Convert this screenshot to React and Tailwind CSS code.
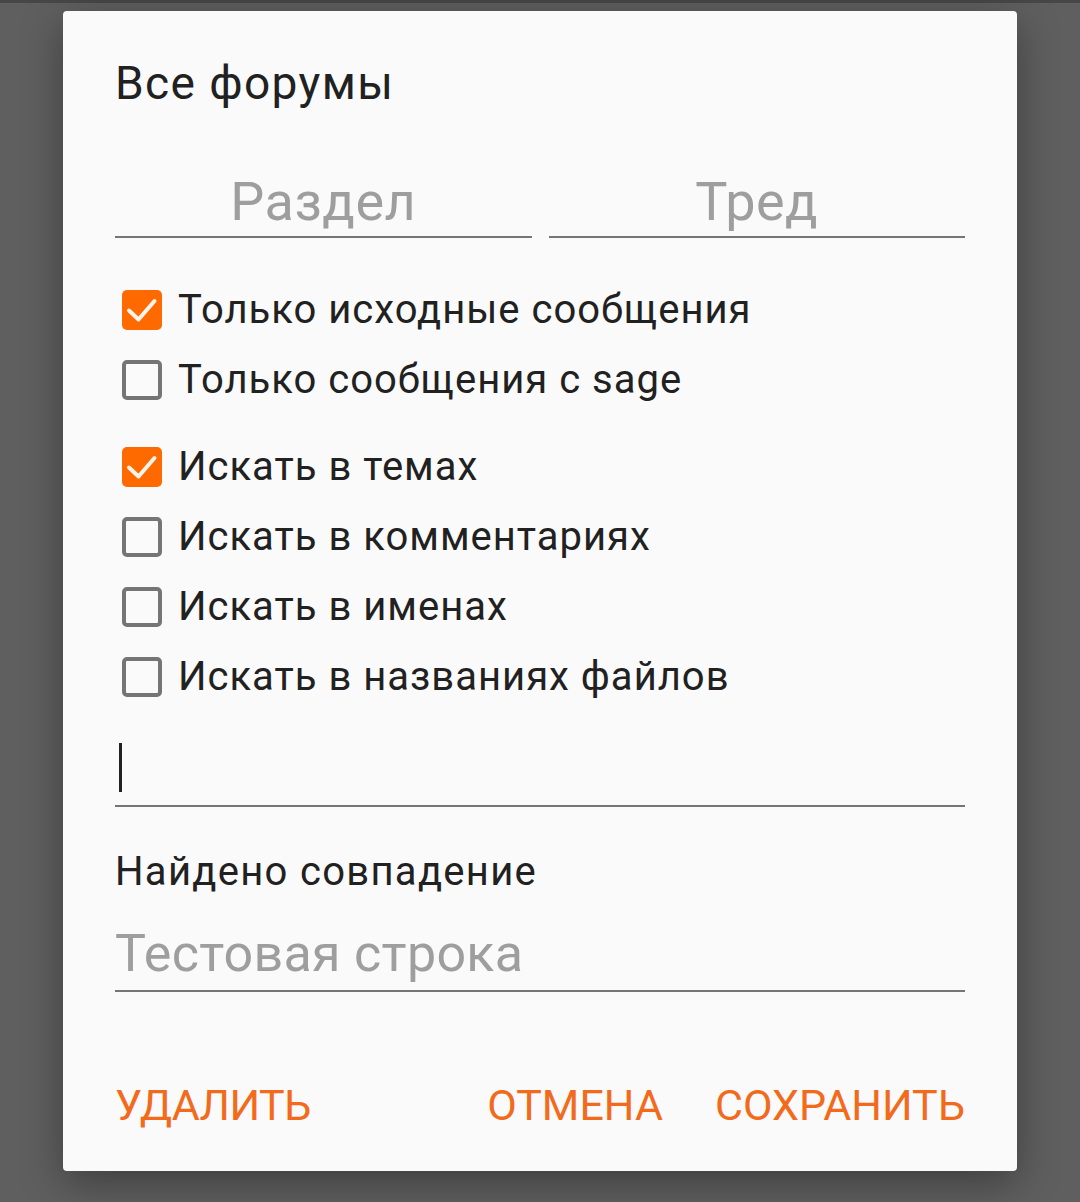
import React from "react";

function Check({ on }) {
  if (on) {
    return (
      <div className="w-[40px] h-[40px] rounded-[5px] bg-[#ff6a00] shrink-0">
        <svg width="40" height="40" viewBox="0 0 40 40" fill="none">
          <path d="M7 20.5l9.5 9L32.5 11" stroke="#fff4ea" strokeWidth="4" strokeLinecap="round" strokeLinejoin="round" />
        </svg>
      </div>
    );
  }
  return <div className="w-[40px] h-[40px] rounded-[5px] border-[4px] border-[#757575] shrink-0" />;
}

function Row({ on, label }) {
  return (
    <div className="h-[70px] flex items-center pl-[7px] gap-[16px]">
      <Check on={on} />
      <span className="text-[40px] leading-[40px] text-[#212121] tracking-[1px]">{label}</span>
    </div>
  );
}

export default function App() {
  return (
    <div className="min-h-[1202px] bg-[#5f5f5f]" style={{ fontFamily: "Roboto, 'Noto Sans', sans-serif" }}>
      <div className="h-[3px] bg-[#474747]" />
      <div className="ml-[63px] mt-[8px] w-[954px] h-[1160px] bg-[#fafafa] rounded-[4px] shadow-[0_12px_40px_rgba(0,0,0,0.35)] px-[52px] flex flex-col">
        <div className="pt-[49px] text-[46px] leading-[46px] text-[#212121] tracking-[1.4px]">Все форумы</div>

        <div className="mt-[68px] flex gap-[17px]">
          <div className="flex-1 text-center text-[54px] leading-[56px] text-[#9e9e9e] pb-[6px] border-b-2 border-[#757575] tracking-[0.5px]">Раздел</div>
          <div className="flex-1 text-center text-[54px] leading-[56px] text-[#9e9e9e] pb-[6px] border-b-2 border-[#757575] tracking-[0.5px]">Тред</div>
        </div>

        <div className="mt-[37px]">
          <Row on label="Только исходные сообщения" />
          <Row label="Только сообщения с sage" />
        </div>
        <div className="mt-[17px]">
          <Row on label="Искать в темах" />
          <Row label="Искать в комментариях" />
          <Row label="Искать в именах" />
          <Row label="Искать в названиях файлов" />
        </div>

        <div className="h-[95px] border-b-2 border-[#757575] pt-[31px] pl-[4px]">
          <div className="w-[3px] h-[49px] bg-[#212121]" />
        </div>

        <div className="mt-[45px] text-[40px] leading-[40px] text-[#212121] tracking-[1.3px]">Найдено совпадение</div>
        <div className="mt-[36px] text-[52px] leading-[52px] text-[#9e9e9e] pb-[10px] border-b-2 border-[#757575] tracking-[0.3px]">Тестовая строка</div>

        <div className="mt-[92px] flex items-center text-[43px] leading-[42px] text-[#f26b1d]">
          <span className="tracking-[-0.6px]">УДАЛИТЬ</span>
          <span className="ml-auto">ОТМЕНА</span>
          <span className="ml-[52px]">СОХРАНИТЬ</span>
        </div>
      </div>
    </div>
  );
}
